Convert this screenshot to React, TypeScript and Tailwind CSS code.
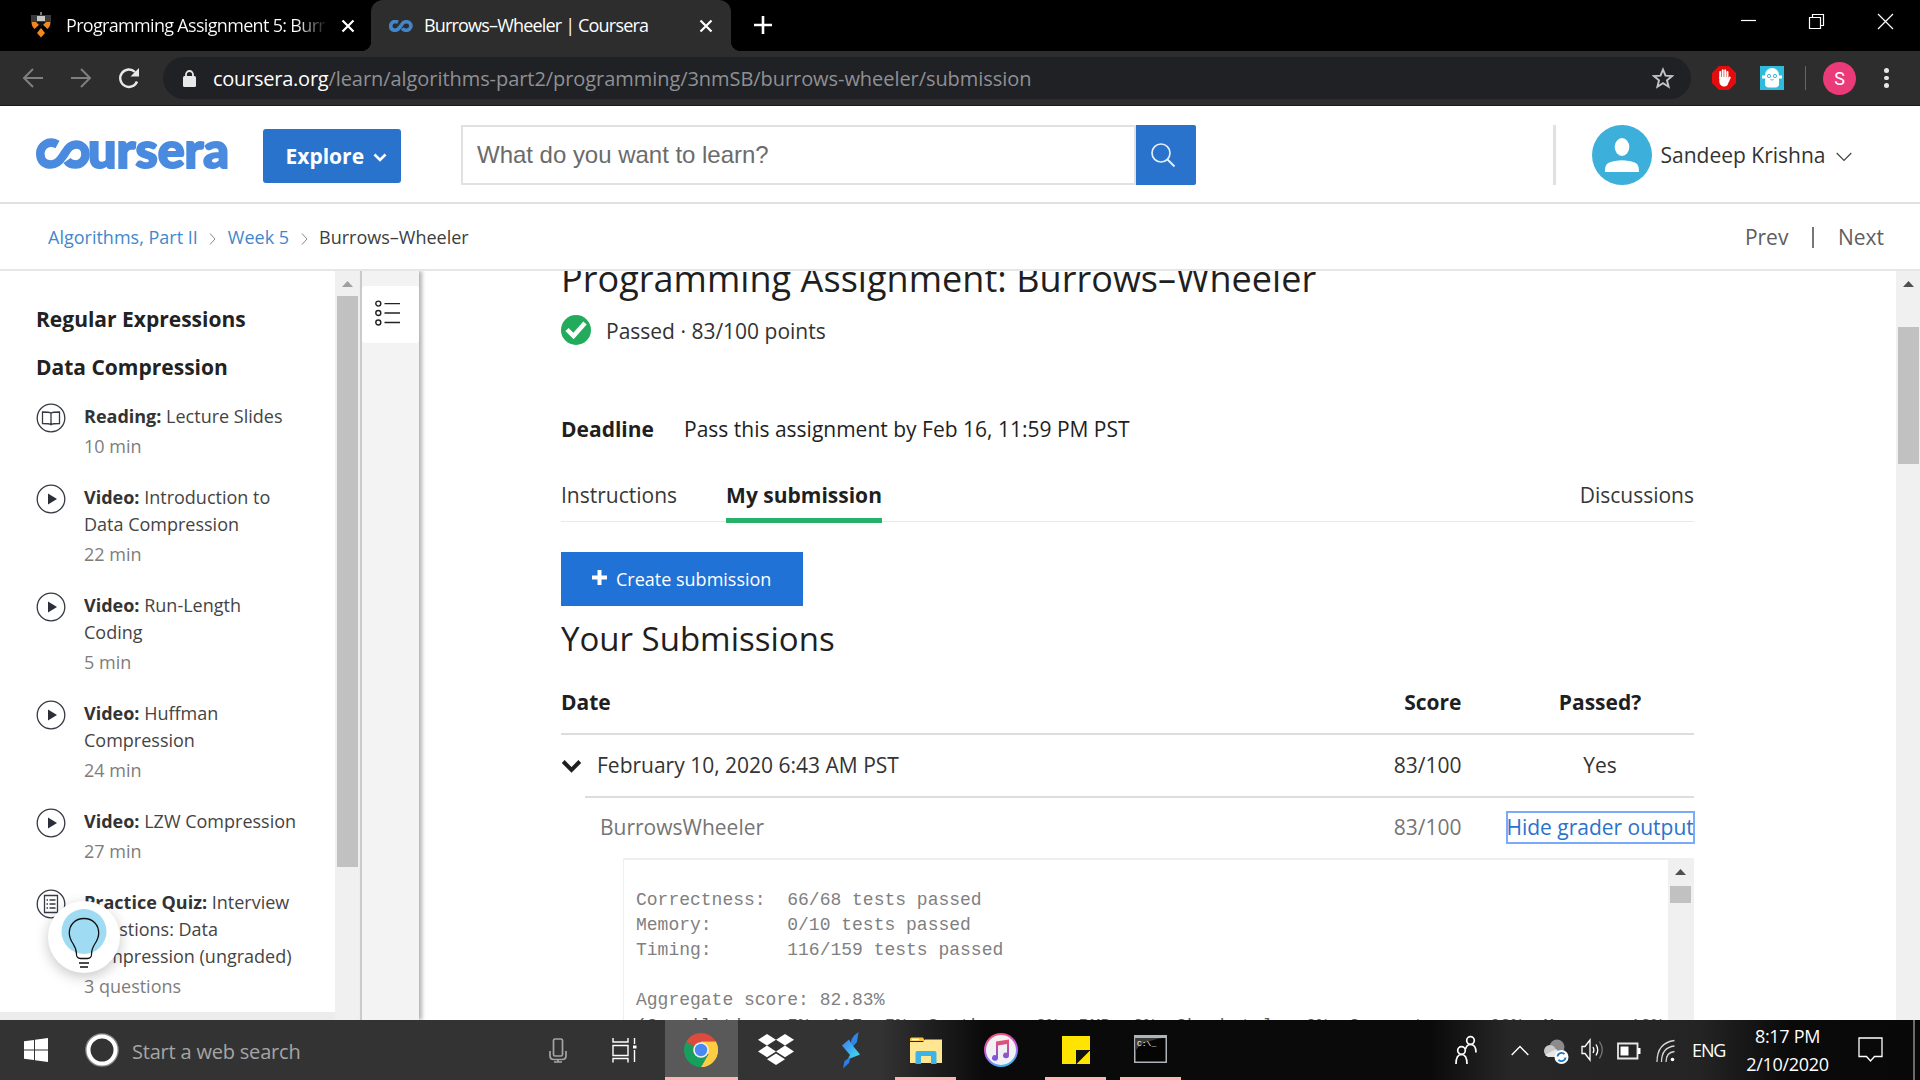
import React from "react";

type SidebarItem = {
  kind: "reading" | "video" | "quiz";
  label: string;
  lines: string[];
  meta: string;
};

const ITEMS: SidebarItem[] = [
  { kind: "reading", label: "Reading:", lines: ["Lecture Slides"], meta: "10 min" },
  { kind: "video", label: "Video:", lines: ["Introduction to", "Data Compression"], meta: "22 min" },
  { kind: "video", label: "Video:", lines: ["Run-Length", "Coding"], meta: "5 min" },
  { kind: "video", label: "Video:", lines: ["Huffman", "Compression"], meta: "24 min" },
  { kind: "video", label: "Video:", lines: ["LZW Compression"], meta: "27 min" },
  { kind: "quiz", label: "Practice Quiz:", lines: ["Interview", "Questions: Data", "Compression (ungraded)"], meta: "3 questions" },
];

const GRADER_SUMMARY = `Correctness:  66/68 tests passed
Memory:       0/10 tests passed
Timing:       116/159 tests passed

Aggregate score: 82.83%`;

const GRADER_WEIGHTS = "(Compilation: 5%, API: 5%, Spotbugs: 0%, PMD: 0%, Checkstyle: 0%, Correctness: 60%, Memory: 10%";

/* ---------- Browser chrome ---------- */

function CloseX() {
  return (
    <svg width="14" height="14" viewBox="0 0 14 14" className="shrink-0">
      <path d="M1.5 1.5L12.5 12.5M12.5 1.5L1.5 12.5" stroke="#fff" strokeWidth="2.2" />
    </svg>
  );
}

function InfinityMark({ className, color, width }: { className: string; color: string; width: number }) {
  return (
    <svg viewBox="0 0 56 28" className={className} fill="none">
      <path
        d="M21 5.2C11 .5 4 7 4 14s5 10 10.5 10c5 0 8-3 11.500-8l3-4.500C32 6.500 35 4 40 4c6 0 11 4 11 10s-5 10-11 10c-4 0-7-1.800-9-4.500"
        stroke={color}
        strokeWidth={width}
      />
    </svg>
  );
}

function TabStrip() {
  return (
    <div className="flex h-[51px] bg-black text-white">
      <div className="flex w-[371px] shrink-0 items-center pl-[31px]">
        <svg width="20" height="26" viewBox="0 0 20 26" className="-mt-[2px] shrink-0">
          <path d="M0 3h20v7H0z" fill="#3a3a3a" />
          <path d="M6 4h8v5H6z" fill="#c9c9c9" />
          <path d="M10 0v3" stroke="#777" strokeWidth="2" />
          <path d="M.5 10h19c0 3-1 5-3 7L10 11l-6.500 6C1.500 15 .5 13 .5 10z" fill="#f0881f" />
          <path d="M10 10l-5 0 5 5 5-5z" fill="#111" />
          <path d="M10 16l4 5-4 4.500L6 21z" fill="#f0881f" />
        </svg>
        <div className="-mt-[1px] ml-[15px] w-[262px] shrink-0 overflow-hidden bg-gradient-to-r from-white from-88% to-transparent to-100% bg-clip-text text-[18px] leading-[24px] tracking-[-0.68px] whitespace-nowrap text-transparent">
          Programming Assignment 5: Burr
        </div>
        <div className="ml-[13px]">
          <CloseX />
        </div>
      </div>
      <div className="relative flex w-[360px] shrink-0 items-center rounded-t-[12px] bg-[#2d2d2d] pl-[18px]">
        <div className="absolute bottom-0 -left-[10px] h-[10px] w-[10px] bg-[radial-gradient(circle_at_0_0,transparent_10px,#2d2d2d_10.500px)]" />
        <div className="absolute -right-[10px] bottom-0 h-[10px] w-[10px] bg-[radial-gradient(circle_at_100%_0,transparent_10px,#2d2d2d_10.500px)]" />
        <InfinityMark className="h-[12px] w-[24px]" color="#4285c8" width={8.500} />
        <div className="-mt-[1px] ml-[11px] w-[275px] text-[18px] leading-[24px] tracking-[-0.82px] whitespace-nowrap">Burrows–Wheeler | Coursera</div>
        <div>
          <CloseX />
        </div>
      </div>
      <div className="flex w-[64px] items-center justify-center">
        <svg width="18" height="18" viewBox="0 0 18 18" className="-mt-[1px]">
          <path d="M9 0v18M0 9h18" stroke="#fff" strokeWidth="2.600" />
        </svg>
      </div>
      <div className="ml-auto flex w-[206px] items-start">
        <svg width="180" height="44" viewBox="0 0 180 44" fill="none" stroke="#fff" strokeWidth="1.200">
          <path d="M27 20.500h15" />
          <path d="M95.500 17.500h11v11h-11zM98.500 17v-2.500h11v11H107" />
          <path d="M164 14l15 15M179 14l-15 15" />
        </svg>
      </div>
    </div>
  );
}

function Toolbar() {
  return (
    <div className="flex h-[55px] items-center border-b border-[#1b1b1b] bg-[#2d2d2d] pl-[22px]">
      <svg width="22" height="22" viewBox="0 0 22 22" fill="none" stroke="#7f7f7f" strokeWidth="2">
        <path d="M21 11H2M11 2L2 11l9 9" />
      </svg>
      <svg width="22" height="22" viewBox="0 0 22 22" fill="none" stroke="#7f7f7f" strokeWidth="2" className="ml-[26px]">
        <path d="M1 11h19M11 2l9 9-9 9" />
      </svg>
      <svg width="24" height="24" viewBox="0 0 24 24" className="ml-[25px]" fill="none">
        <path d="M20 15.500A8.700 8.700 0 1 1 18 6" stroke="#e8e8e8" strokeWidth="2.400" />
        <path d="M22 2v8.500h-8.500z" fill="#e8e8e8" />
      </svg>
      <div className="ml-[22px] flex h-[42px] w-[1528px] items-center rounded-full bg-[#202124] pr-[17px] pl-[20px]">
        <svg width="13" height="17" viewBox="0 0 13 17">
          <rect x="0" y="6" width="13" height="11" rx="1.500" fill="#e8e8e8" />
          <path d="M3 7V4.500a3.500 3.500 0 0 1 7 0V7" fill="none" stroke="#e8e8e8" strokeWidth="1.800" />
        </svg>
        <div className="ml-[17px] pt-[2px] text-[20px] leading-[28px] tracking-[-0.06px] text-[#8f9094]">
          <span className="tracking-[-0.25px] text-white">coursera.org</span>/learn/algorithms-part2/programming/3nmSB/burrows-wheeler/submission
        </div>
        <svg width="22" height="22" viewBox="0 0 22 22" className="ml-auto" fill="none" stroke="#c4c4c4" strokeWidth="1.900">
          <path d="M11 2.500l2.500 6.100 6.500.5-5 4.200 1.600 6.400L11 16.200l-5.600 3.500L7 13.300 2 9.100l6.500-.5z" />
        </svg>
      </div>
      <svg width="24" height="24" viewBox="0 0 24 24" className="ml-[21px]">
        <path d="M7 0h10l7 7v10l-7 7H7l-7-7V7z" fill="#e40d0d" />
        <g stroke="#fff" strokeWidth="1.900" strokeLinecap="round">
          <path d="M8.200 12V6M10.700 12V4.200M13.200 12V4.200M15.500 12V6" />
          <path d="M17.800 11.500l-1.800 4" />
        </g>
        <path d="M7.300 11h9.200v4.500c0 3-1.600 5-4.300 5-3.200 0-4.900-2.500-4.900-5.500z" fill="#fff" />
      </svg>
      <svg width="24" height="24" viewBox="0 0 24 24" className="ml-[24px]">
        <rect width="24" height="24" fill="#2fbcdc" />
        <path d="M5 9a7 7 0 0 1 14 0v9c0 2-1.500 3.500-3.500 3.500h-7C6.500 21.500 5 20 5 18z" fill="#fff" />
        <path d="M2 11h3M19 11h3" stroke="#fff" strokeWidth="3" />
        <circle cx="9" cy="10" r="1.600" fill="none" stroke="#2fbcdc" />
        <circle cx="15" cy="10" r="1.600" fill="none" stroke="#2fbcdc" />
        <path d="M10.500 13.500q1.500 1.200 3 0" fill="none" stroke="#2fbcdc" />
      </svg>
      <div className="ml-[21px] h-[24px] w-px bg-[#666]" />
      <div className="ml-[17px] flex h-[33px] w-[33px] items-center justify-center rounded-full bg-[#ea3b78] font-[Roboto] text-[18px] text-white">S</div>
      <div className="ml-[28px] flex flex-col gap-[3px]">
        <div className="h-[4.500px] w-[4.500px] rounded-full bg-[#e8e8e8]" />
        <div className="h-[4.500px] w-[4.500px] rounded-full bg-[#e8e8e8]" />
        <div className="h-[4.500px] w-[4.500px] rounded-full bg-[#e8e8e8]" />
      </div>
    </div>
  );
}

/* ---------- Site header ---------- */

function SiteHeader() {
  return (
    <header className="flex h-[98px] items-center border-b-2 border-[#e1e1e1] bg-white pt-[2px] pl-[36px]">
      <svg width="193" height="60" viewBox="0 0 193 60" className="shrink-0">
        <path
          d="M21.500 19.500C12 14.500 4.300 21 4.300 28.700S9 39.500 15 39.500c5.500 0 8.500-3 12-8.500l2-3C32 22.500 35 19.500 40 19.500c6 0 9.500 4.500 9.500 9.700s-4 10.300-10 10.300c-4.500 0-7-1.800-8.500-4"
          fill="none"
          stroke="#4a8adf"
          strokeWidth="8.600"
        />
        <text x="52" y="43" textLength="141" lengthAdjust="spacingAndGlyphs" fill="#4a8adf" stroke="#4a8adf" strokeWidth="2" className="font-[Lato] text-[49px] font-black">
          ursera
        </text>
      </svg>
      <button className="mt-[2px] ml-[34px] flex h-[54px] w-[138px] items-center rounded-[3px] bg-[#2a73cc] pt-[1px] pl-[22.500px] text-[21px] font-bold text-white">
        Explore
        <svg width="14" height="9" viewBox="0 0 14 9" className="mt-[2px] ml-[9px]" fill="none">
          <path d="M1.500 1.500L7 7l5.500-5.500" stroke="#fff" strokeWidth="2.600" />
        </svg>
      </button>
      <div className="ml-[60px] flex h-[60px] w-[675px] items-center border-2 border-[#e1e1e1] pl-[14px] font-['Liberation_Sans'] text-[24px] tracking-[-0.02px] text-[#6b6b6b]">
        What do you want to learn?
      </div>
      <div className="flex h-[60px] w-[60px] items-center justify-center rounded-r-[2px] bg-[#2a73cc]">
        <svg width="26" height="26" viewBox="0 0 26 26" fill="none" stroke="#e6eefa" strokeWidth="1.700" className="-ml-[6px]">
          <circle cx="11" cy="11" r="9" />
          <path d="M17.500 17.500l7 7" strokeWidth="2" />
        </svg>
      </div>
      <div className="ml-auto h-[60px] w-[3px] bg-[#e1e1e1]" />
      <svg width="60" height="60" viewBox="0 0 60 60" className="ml-[36px]">
        <circle cx="30" cy="30" r="30" fill="#3cafda" />
        <ellipse cx="30" cy="22" rx="7.300" ry="9" fill="#fff" />
        <path d="M13 47c0-8 2-9.500 10-11q7-1.500 14 0c8 1.500 10 3 10 11z" fill="#fff" />
      </svg>
      <div className="ml-[9px] pt-[1px] text-[21px] text-[#333]">Sandeep Krishna</div>
      <svg width="16" height="10" viewBox="0 0 16 10" className="mt-[3px] mr-[68px] ml-[10.500px]" fill="none">
        <path d="M.7 1L8 8.500 15.300 1" stroke="#444" strokeWidth="1.200" />
      </svg>
    </header>
  );
}

function CrumbChevron() {
  return (
    <svg width="7" height="12" viewBox="0 0 7 12" className="mt-[3px]" fill="none">
      <path d="M1 .5L6 6l-5 5.500" stroke="#888" />
    </svg>
  );
}

function Breadcrumbs() {
  return (
    <div className="flex h-[67px] items-center border-b-2 border-[#e6e6e6] bg-white pt-[2px] pr-[36px] pl-[48px] text-[18px] text-[#3d3d3d]">
      <div className="flex items-center gap-[11.500px]">
        <span className="text-[#4287cd]">Algorithms, Part II</span>
        <CrumbChevron />
        <span className="text-[#4287cd]">Week 5</span>
        <CrumbChevron />
        <span>Burrows–Wheeler</span>
      </div>
      <div className="ml-auto flex items-center text-[21px] text-[#5e5e5e]">
        <span>Prev</span>
        <div className="mr-[24px] ml-[24px] h-[21px] w-[1.500px] bg-[#777]" />
        <span>Next</span>
      </div>
    </div>
  );
}

/* ---------- Sidebar ---------- */

function ItemIcon({ kind }: { kind: SidebarItem["kind"] }) {
  return (
    <svg width="30" height="30" viewBox="0 0 30 30" className="shrink-0" fill="none" stroke="#373a44" strokeWidth="1.300">
      <circle cx="15" cy="15" r="13.800" />
      {kind === "video" && <path d="M12 9.500v11l9-5.500z" fill="#2c2f38" stroke="none" />}
      {kind === "reading" && <path d="M15 10.200c-1.500-1.200-4-1.200-8.500-1.200v11.500c4.500 0 7 0 8.500 1.200 1.500-1.200 4-1.200 8.500-1.200V9c-4.500 0-7 0-8.500 1.200zM15 10.200v11.500" />}
      {kind === "quiz" && (
        <>
          <path d="M8.500 6.500h13v17h-13z" />
          <path d="M13.500 11h6M13.500 15h6M13.500 19h6M10.500 11h1.500M10.500 15h1.500M10.500 19h1.500" />
        </>
      )}
    </svg>
  );
}

function ScrollArrow({ color }: { color: string }) {
  return (
    <svg width="11" height="6" viewBox="0 0 11 6">
      <path d="M5.500 0L11 6H0z" fill={color} />
    </svg>
  );
}

function Sidebar() {
  return (
    <aside className="flex h-full w-[360px] shrink-0">
      <div className="relative flex w-[335px] flex-col bg-white pt-[24px] pl-[36px]">
        <h3 className="h-[48px] text-[21px] leading-[48px] font-bold text-[#222]">Regular Expressions</h3>
        <h3 className="h-[48px] text-[21px] leading-[48px] font-bold text-[#222]">Data Compression</h3>
        <div className="mt-[12px] flex flex-col gap-[24px]">
          {ITEMS.map((it) => (
            <div key={it.lines[0]} className="flex">
              <ItemIcon kind={it.kind} />
              <div className="ml-[18px] text-[18px] leading-[27px] whitespace-nowrap text-[#444]">
                {it.lines.map((line, i) => (
                  <div key={line}>
                    {i === 0 && <span className="font-bold text-[#333]">{it.label} </span>}
                    {line}
                  </div>
                ))}
                <div className="mt-[3px] text-[#7d7d7d]">{it.meta}</div>
              </div>
            </div>
          ))}
        </div>
        <div className="absolute bottom-0 left-0 h-[8px] w-full bg-[#ececec]" />
        <div className="absolute top-[630px] left-[48px] flex h-[72px] w-[72px] items-center justify-center rounded-full bg-white shadow-[0_4px_14px_rgba(0,0,0,0.22)]">
          <svg width="72" height="72" viewBox="0 0 72 72" fill="none">
            <circle cx="36" cy="30.500" r="22.500" fill="#9fdcf4" />
            <path d="M36 17.500c-9 0-14.700 6.500-14.700 14.500 0 10 7.200 11 7.200 21 0 3 1.500 4.500 4 4.500h7c2.500 0 4-1.500 4-4.500 0-10 7.200-11 7.200-21 0-8-5.700-14.500-14.700-14.500z" stroke="#111" strokeWidth="1.300" />
            <path d="M29.500 54h13" stroke="#fff" strokeWidth="2" />
            <path d="M31 62h10M32 66h8" stroke="#111" strokeWidth="1.500" />
          </svg>
        </div>
      </div>
      <div className="flex w-[25px] flex-col items-center bg-[#f0f0f0] pt-[10px]">
        <ScrollArrow color="#a0a0a0" />
        <div className="mt-[9px] h-[571px] w-[21px] bg-[#c1c1c1]" />
      </div>
    </aside>
  );
}

function Rail() {
  return (
    <div className="z-10 flex h-full w-[59px] shrink-0 flex-col border-l-2 border-[#cacaca] bg-[#f3f3f3] pt-[15px] shadow-[3px_0_4px_rgba(0,0,0,0.3)]">
      <div className="flex h-[57px] items-center rounded-[3px] bg-white pl-[13px]">
        <svg width="26" height="26" viewBox="0 0 26 26" fill="none" stroke="#222" strokeWidth="1.400" className="-mt-[4px]">
          <circle cx="3.300" cy="3.600" r="2.500" />
          <circle cx="3.300" cy="13" r="2.500" />
          <circle cx="3.300" cy="22.500" r="2.500" />
          <path d="M9.500 3.600H25M9.500 13H25M9.500 22.500H25" />
        </svg>
      </div>
    </div>
  );
}

/* ---------- Main content ---------- */

function Content() {
  return (
    <main className="flex h-full min-w-0 flex-1 overflow-hidden bg-white text-[#1f1f1f]">
      <div className="ml-[142px] flex w-[1133px] shrink-0 flex-col text-[21px]">
        <h1 className="-mt-[20px] h-[53px] shrink-0 text-[36px] leading-[55px] tracking-[0.05px] whitespace-nowrap">Programming Assignment: Burrows–Wheeler</h1>
        <div className="mt-[11px] flex h-[30px] shrink-0 items-center text-[#333]">
          <svg width="30" height="30" viewBox="0 0 30 30">
            <circle cx="15" cy="15" r="15" fill="#22ab5b" />
            <path d="M6 14.500l6.500 6.500L24 8" fill="none" stroke="#fff" strokeWidth="4.500" />
          </svg>
          <span className="ml-[15px] pt-[4px]">Passed · 83/100 points</span>
        </div>
        <div className="mt-[70px] flex h-[30px] shrink-0 items-center">
          <span className="w-[123px] font-bold">Deadline</span>
          <span>Pass this assignment by Feb 16, 11:59 PM PST</span>
        </div>
        <nav className="mt-[29px] flex h-[48px] shrink-0 border-b border-[#e9e9e9] leading-[42px] text-[#373737]">
          <span>Instructions</span>
          <span className="ml-[49px] h-[49px] border-b-[5px] border-[#27b06a] font-bold text-[#1f1f1f]">My submission</span>
          <span className="ml-auto">Discussions</span>
        </nav>
        <button className="mt-[30px] flex h-[54px] w-[242px] shrink-0 items-center bg-[#2172d6] pl-[31px] text-[18px] text-white">
          <svg width="15" height="15" viewBox="0 0 15 15" className="-mt-[4px]">
            <path d="M7.500 0v15M0 7.500h15" stroke="#fff" strokeWidth="4" />
          </svg>
          <span className="ml-[9px]">Create submission</span>
        </button>
        <h2 className="mt-[9px] h-[48px] shrink-0 text-[33px] leading-[48px]">Your Submissions</h2>
        <div className="mt-[7px] flex h-[65px] shrink-0 items-center border-b-2 border-[#ddd] pt-[2px] font-bold">
          <span>Date</span>
          <span className="ml-auto">Score</span>
          <span className="ml-[44.500px] w-[188px] text-center">Passed?</span>
        </div>
        <div className="flex h-[63px] shrink-0">
          <div className="flex w-[24px] items-center pb-[2px]">
            <svg width="21" height="14" viewBox="0 0 21 14" fill="none" className="shrink-0">
              <path d="M2.200 2.500l8.300 8.300 8.300-8.300" stroke="#1f1f1f" strokeWidth="4" />
            </svg>
          </div>
          <div className="flex flex-1 items-center border-b-2 border-[#ddd] pl-[12px] text-[#333]">
            <span>February 10, 2020 6:43 AM PST</span>
            <span className="ml-auto">83/100</span>
            <span className="ml-[44.500px] w-[188px] text-center">Yes</span>
          </div>
        </div>
        <div className="flex h-[60px] shrink-0 items-center pl-[39px] text-[#757575]">
          <span>BurrowsWheeler</span>
          <span className="ml-auto">83/100</span>
          <span className="-mt-[1px] ml-[45px] h-[31px] w-[187.500px] leading-[31px] tracking-[-0.01px] whitespace-nowrap text-[#2a73cc] outline-2 -outline-offset-1 outline-[#78abfb]">Hide grader output</span>
        </div>
        <div className="ml-[62px] flex flex-1 border-t-2 border-l border-[#efefef]">
          <div className="flex-1 pt-[28px] pl-[12px] text-[18px] leading-[25px] whitespace-pre text-[#808080]">
            <pre className="font-['Liberation_Mono']">{GRADER_SUMMARY}</pre>
            <pre className="mt-[1px] h-[25px] font-['Liberation_Mono'] text-[#5a5a5a]">{GRADER_WEIGHTS}</pre>
          </div>
          <div className="-mt-[2px] flex w-[26px] flex-col items-center bg-[#f0f0f0] pt-[11px] pr-[1px]">
            <ScrollArrow color="#505050" />
            <div className="mt-[11px] h-[17px] w-[21px] bg-[#c1c1c1]" />
          </div>
        </div>
      </div>
      <div className="ml-auto flex w-[24px] flex-col items-center bg-[#f0f0f0] pt-[10px]">
        <ScrollArrow color="#505050" />
        <div className="mt-[40px] h-[137px] w-[21px] bg-[#c1c1c1]" />
      </div>
    </main>
  );
}

/* ---------- Taskbar ---------- */

function TaskButton({ children, open, active }: { children: React.ReactNode; open?: boolean; active?: boolean }) {
  return (
    <div className={active ? "relative flex h-full w-[73px] items-center justify-center bg-[#595959]" : "relative flex h-full w-[75px] items-center justify-center"}>
      {children}
      {open && <div className={active ? "absolute bottom-0 h-[3px] w-full bg-[#ffb4b0]" : "absolute bottom-0 h-[3px] w-[61px] bg-[#ffb4b0]"} />}
    </div>
  );
}

function Taskbar() {
  return (
    <footer className="flex h-[60px] items-center bg-[linear-gradient(90deg,#333_0,#333_880px,#0a0a0a_985px,#0a0a0a_1430px,#272727_1510px,#242424_1700px,#0a0a0a_1790px,#080808_1920px)] text-white">
      <svg width="24" height="24" viewBox="0 0 24 24" className="ml-[24px]" fill="#fff">
        <path d="M0 3.300L10 1.900V11.500H0zM11 1.800L24 0v11.500H11zM0 12.500h10v9.600L0 20.700zM11 12.500h13V24l-13-1.800z" />
      </svg>
      <svg width="36" height="36" viewBox="0 0 36 36" className="ml-[36px]" fill="none">
        <circle cx="18" cy="18" r="15.800" stroke="#8a8a8a" strokeWidth="2" />
        <circle cx="18" cy="18" r="13.500" stroke="#fff" strokeWidth="4" />
      </svg>
      <div className="ml-[12px] w-[417px] pt-[3px] text-[20px] tracking-[-0.2px] text-[#a5a5a5]">Start a web search</div>
      <svg width="18" height="25" viewBox="0 0 18 25" fill="none" stroke="#a5a5a5" strokeWidth="1.700">
        <rect x="4.500" y="1" width="9" height="17" rx="1.500" />
        <path d="M1 13v4.500c0 2.500 1.500 4 4 4h8c2.500 0 4-1.500 4-4V13M9 21.500V24M5 24h8" />
      </svg>
      <svg width="27" height="25" viewBox="0 0 27 25" fill="none" stroke="#fff" strokeWidth="1.400" className="ml-[45px]">
        <path d="M1 0v4h15V0M1 7.500h15v10H1zM1 24.500v-4h15v4M22.500 0v6M22.500 12v12" />
        <path d="M21 7.500h3.500v3H21z" fill="#fff" stroke="none" />
      </svg>
      <div className="ml-[26px] flex h-full">
        <TaskButton open active>
          <svg width="34" height="34" viewBox="0 0 34 34" className="-ml-[2px]">
            <path d="M17 17L2.300 8.500A17 17 0 0 1 31.700 8.500H17z" fill="#dd4b3e" />
            <path d="M17 17L31.700 8.500A17 17 0 0 1 17 34L24.400 21z" fill="#ffcd41" />
            <path d="M17 17h14L17 34A17 17 0 0 0 31.700 8.500H17z" fill="#ffcd41" />
            <path d="M2.300 8.500A17 17 0 0 0 17 34l7.400-13L9.600 21.200z" fill="#17a05d" />
            <path d="M2.300 8.500l7.300 12.700L17 17z" fill="#dd4b3e" />
            <path d="M2.300 8.500L9.600 21.200 17 25 9 13z" fill="#17a05d" />
            <circle cx="17" cy="17" r="7.800" fill="#f1f1f1" />
            <circle cx="17" cy="17" r="6.200" fill="#4889f4" />
          </svg>
        </TaskButton>
        <TaskButton>
          <svg width="36" height="32" viewBox="0 0 36 32" fill="#fff">
            <path d="M9 0l9 5.800-9 5.800L0 5.800zM27 0l9 5.800-9 5.800-9-5.800zM9 11.600l9 5.800-9 5.800-9-5.800zM27 11.600l9 5.800-9 5.800-9-5.800zM18 19.500l9 5.800-9 5.800-9-5.800z" />
          </svg>
        </TaskButton>
        <TaskButton>
          <svg width="20" height="37" viewBox="0 0 20 37">
            <defs>
              <linearGradient id="swift" x1="0" y1="0" x2="1" y2="1">
                <stop offset="0" stopColor="#3d7cf0" />
                <stop offset="1" stopColor="#42e3ee" />
              </linearGradient>
            </defs>
            <path d="M17.500 0L16 10l-4.500 5-2-2.500C10 7 12 4 17.500 0z" fill="#2f86e8" />
            <path d="M8 7.500L1 13.500l8 9.500-2.500 4.500L19 22.500 10.500 12z" fill="url(#swift)" />
            <path d="M9.500 25L8 31l-6 5.500L3.500 29z" fill="#2f7fe8" />
          </svg>
        </TaskButton>
        <TaskButton open>
          <svg width="32" height="27" viewBox="0 0 32 27">
            <path d="M0 2a1.500 1.500 0 0 1 1.500-1.500H13l2 3.500H0z" fill="#fbc638" />
            <path d="M0 5h13l2-2.500h17V26H0z" fill="#ffe692" />
            <path d="M2 2.500h7" stroke="#fff" strokeWidth="1.500" />
            <path d="M5.500 27V16q0-2 2-2h17q2 0 2 2v11h-5.500v-8h-10v8z" fill="#3cb4ea" />
          </svg>
        </TaskButton>
        <TaskButton>
          <svg width="34" height="34" viewBox="0 0 34 34">
            <defs>
              <linearGradient id="ring" x1=".3" y1="0" x2=".6" y2="1">
                <stop offset="0" stopColor="#fb4f6e" />
                <stop offset=".55" stopColor="#b65df0" />
                <stop offset="1" stopColor="#30c0fb" />
              </linearGradient>
              <linearGradient id="note" x1="0" y1="0" x2="0" y2="1">
                <stop offset="0" stopColor="#f0506c" />
                <stop offset="1" stopColor="#6a58f0" />
              </linearGradient>
            </defs>
            <circle cx="17" cy="17" r="17" fill="url(#ring)" />
            <circle cx="17" cy="17" r="15" fill="#f1f1f3" />
            <path d="M12 8.500L25 6.500v16a3 2.800 0 1 1-2-2.700V11l-9 1.500V25a3 2.800 0 1 1-2-2.700z" fill="url(#note)" />
          </svg>
        </TaskButton>
        <TaskButton open>
          <svg width="28" height="28" viewBox="0 0 28 28">
            <path d="M0 0h28v28H0z" fill="#ffe400" />
            <path d="M14 14h14v.5L14.500 28H14z" fill="#111" />
          </svg>
        </TaskButton>
        <TaskButton open>
          <svg width="33" height="28" viewBox="0 0 33 28" className="-mt-[3px]">
            <path d="M0 0h33v28H0z" fill="#aeb4ba" />
            <path d="M1.500 3h30v23.500h-30z" fill="#050505" />
            <path d="M1.500 3h27C16 5 5 9 1.500 16z" fill="#3a3a3a" />
            <text x="3" y="11" fill="#fff" className="font-['Liberation_Mono'] text-[8px]">C:\_</text>
          </svg>
        </TaskButton>
      </div>
      <div className="ml-auto flex h-full items-center">
        <svg width="22" height="30" viewBox="0 0 22 30" fill="none" stroke="#fff" strokeWidth="1.700" className="mr-[34px]">
          <circle cx="6.500" cy="15.500" r="3.800" />
          <path d="M1 29c0-6 2-9.500 5.500-9.500S12 23 12 29" />
          <circle cx="15.500" cy="5.500" r="3.800" />
          <path d="M10.500 14c.8-3 2.500-4.500 5-4.500 3.500 0 5.500 3 5.500 8" />
        </svg>
        <svg width="18" height="11" viewBox="0 0 18 11" fill="none" stroke="#fff" strokeWidth="1.400" className="mr-[15px]">
          <path d="M.7 10L9 1.500 17.300 10" />
        </svg>
        <svg width="25" height="26" viewBox="0 0 25 26" className="mt-[4px] mr-[12px]">
          <circle cx="13" cy="8" r="7.500" fill="#8b8b8b" />
          <circle cx="6" cy="12" r="6" fill="#c8c8c8" />
          <path d="M1 16l11-6 8 8H4z" fill="#e6e6e6" />
          <circle cx="17.500" cy="18" r="7" fill="#fff" />
          <path d="M13.500 17.500a4 4 0 0 1 7-2.300M21.500 18.500a4 4 0 0 1-7 2.300" fill="none" stroke="#1878c8" strokeWidth="1.800" />
        </svg>
        <svg width="23" height="24" viewBox="0 0 23 24" fill="none" stroke="#fff" strokeWidth="1.300" className="mr-[13px]">
          <path d="M1 8.500h3L9 2v20l-5-6.500H1z" />
          <path d="M12 9q1.800 3 0 6" />
          <path d="M15 6.500q3.500 5.500 0 11" />
          <path d="M18.500 3.500q5.500 8.500 0 17" stroke="#777" />
        </svg>
        <svg width="24" height="18" viewBox="0 0 24 18" className="mt-[2px] mr-[15px]">
          <path d="M1 1.500h19.500v15H1z" fill="none" stroke="#e8e8e8" strokeWidth="1.800" />
          <path d="M21 6h2.500v6H21z" fill="#fff" />
          <path d="M3.500 4.500h8v9h-8z" fill="#fff" />
        </svg>
        <svg width="20" height="24" viewBox="0 0 20 24" fill="none" stroke="#d5d5d5" strokeWidth="1.300" className="mt-[1px] mr-[16px]">
          <path d="M1 23C1 10 7 3 18.500 1.500" />
          <path d="M5.500 23C5.500 13.500 10 8 18.500 7" />
          <path d="M10 23c0-6 3-10 8.500-10.500" />
          <circle cx="16.500" cy="20.500" r="1.800" fill="#fff" stroke="none" />
        </svg>
        <span className="w-[50px] text-[18px] tracking-[-1.100px]">ENG</span>
        <div className="w-[91px] text-center text-[18px] leading-[28px] tracking-[-0.300px]">
          <div>8:17 PM</div>
          <div>2/10/2020</div>
        </div>
        <svg width="25" height="26" viewBox="0 0 25 26" fill="none" stroke="#fff" strokeWidth="1.300" className="mr-[30px] ml-[25px]">
          <path d="M1 1h23v18.500h-7.500L12.500 24l-4-4.500H1z" />
        </svg>
        <div className="mr-[5px] h-full w-[2px] bg-[#6a6a6a]" />
      </div>
    </footer>
  );
}

export default function App() {
  return (
    <div className="flex h-[1080px] w-[1920px] flex-col overflow-hidden bg-white font-['Open_Sans',sans-serif]">
      <TabStrip />
      <Toolbar />
      <SiteHeader />
      <Breadcrumbs />
      <div className="flex h-[749px] shrink-0 overflow-hidden">
        <Sidebar />
        <Rail />
        <Content />
      </div>
      <Taskbar />
    </div>
  );
}
